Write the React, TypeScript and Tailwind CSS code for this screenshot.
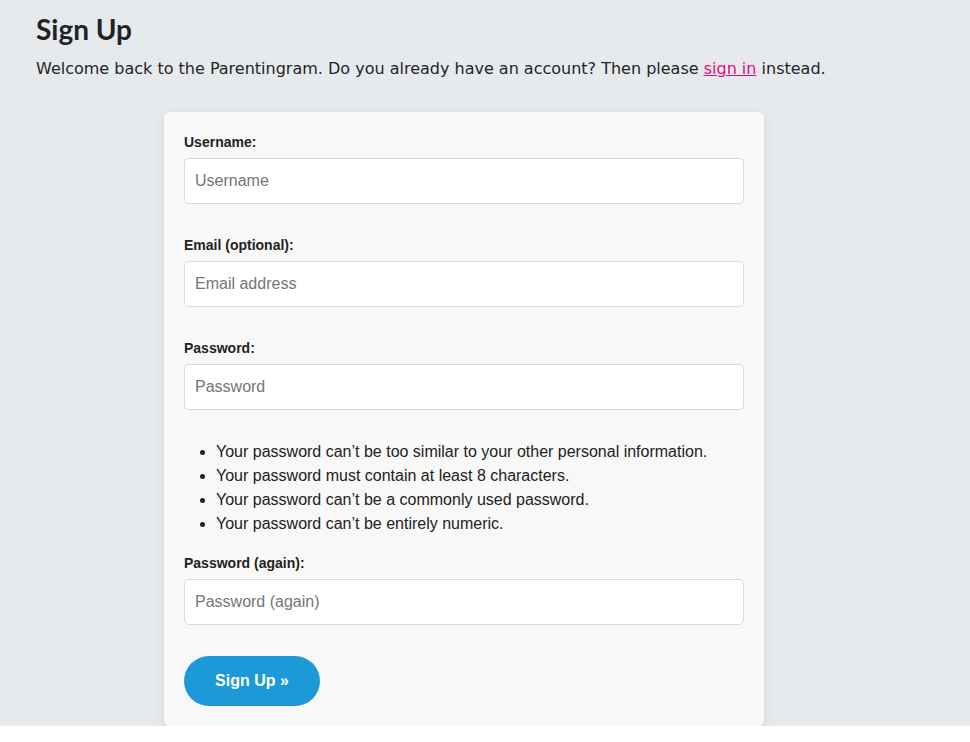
import React from 'react';

const fields = [
  { id: 'username', label: 'Username:', placeholder: 'Username', type: 'text' },
  { id: 'email', label: 'Email (optional):', placeholder: 'Email address', type: 'email' },
  { id: 'password1', label: 'Password:', placeholder: 'Password', type: 'password' },
];

const rules = [
  'Your password can’t be too similar to your other personal information.',
  'Your password must contain at least 8 characters.',
  'Your password can’t be a commonly used password.',
  'Your password can’t be entirely numeric.',
];

function Field({ id, label, placeholder, type }: { id: string; label: string; placeholder: string; type: string }) {
  return (
    <div>
      <label htmlFor={id} className="mb-[6px] block text-[14px] font-bold leading-[20px] text-[#222]">
        {label}
      </label>
      <input
        id={id}
        name={id}
        type={type}
        placeholder={placeholder}
        className="block h-[46px] w-full rounded-[5px] border border-[#dadada] bg-white px-[10px] text-[16px] text-[#222] placeholder:text-[#757575]"
      />
    </div>
  );
}

export default function App() {
  return (
    <div className="min-h-[726px] bg-[#e7eaed] px-9 pt-[12px] font-['DejaVu_Sans',sans-serif] text-[#212529]">
      <h1 className="font-['Lato',sans-serif] text-[28px] font-bold leading-[34px] text-[#1f2326]">Sign Up</h1>
      <p className="mt-[11px] text-[16px] leading-[24px]">
        Welcome back to the Parentingram. Do you already have an account? Then please{' '}
        <a href="#" className="text-[#e5097f] underline">sign in</a> instead.
      </p>

      {/* form card */}
      <form className="ml-[128px] mt-[31px] w-[600px] rounded-[6px] bg-[#f8f8f8] px-5 pb-5 pt-5 font-['Liberation_Sans',Arial,sans-serif] shadow-[0_2px_10px_rgba(0,0,0,0.08)]">
        <div className="flex flex-col gap-[31px]">
          {fields.map((f) => (
            <Field key={f.id} {...f} />
          ))}
        </div>

        <ul className="mt-[30px] list-disc pl-[32px] text-[16px] leading-[24px] text-[#222]">
          {rules.map((r) => (
            <li key={r}>{r}</li>
          ))}
        </ul>

        <div className="mt-[17px]">
          <Field id="password2" label="Password (again):" placeholder="Password (again)" type="password" />
        </div>

        <button
          type="submit"
          className="mt-[31px] h-[50px] w-[136px] rounded-full bg-[#1b9ad7] text-[16px] font-bold text-white"
        >
          Sign Up »
        </button>
      </form>
    </div>
  );
}
